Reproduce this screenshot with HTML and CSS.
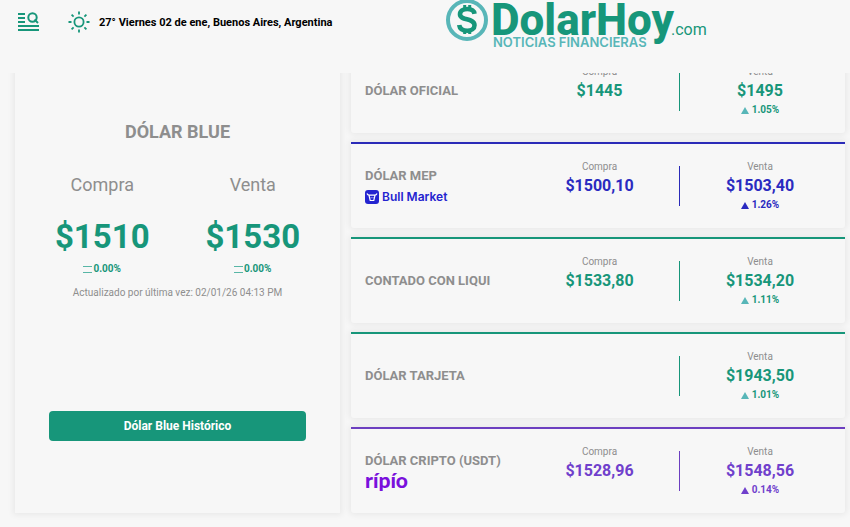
FILE: index.html
```
<!DOCTYPE html>
<html lang="es">
<head>
  <meta charset="UTF-8">
  <meta name="viewport" content="width=device-width, initial-scale=1.0">
  <title>DolarHoy.com</title>
  <link rel="stylesheet" href="styles.css">
</head>
<body>
  <header class="header">
    <div class="header-left">
      <button class="menu-button" type="button" aria-label="Menú">
        <svg width="22" height="20" viewBox="0 0 22 20" fill="none" stroke="#17967a" stroke-width="2">
          <path d="M0 2h7M0 6h7M0 10h7M0 14h21M0 18h21" />
          <circle cx="14.500" cy="5.500" r="4.200" />
          <path d="M16.500 7.500l3.500 3.500" />
        </svg>
      </button>
      <svg class="sun" width="22" height="22" viewBox="0 0 22 22" fill="none" stroke="#17967a" stroke-width="1.8">
        <circle cx="11" cy="11" r="4.600" />
        <path d="M11 .5v3M11 18.500v3M.5 11h3M18.500 11h3M3.600 3.600l2 2M16.400 16.400l2 2M3.600 18.400l2-2M16.400 5.600l2-2" />
      </svg>
      <span class="weather">27° Viernes 02 de ene, Buenos Aires, Argentina</span>
    </div>
    <a class="logo" href="#" aria-label="DolarHoy.com">
      <svg width="264" height="52" viewBox="0 0 264 52">
        <circle cx="22" cy="20" r="19" fill="none" stroke="#58b6b8" stroke-width="4" />
        <path d="M29.500 13.800C29 10.500 26 9 22.300 9C18 9 15 11 15 14.200C15 21 29.500 17.500 29.500 25.200C29.500 28.500 26.500 30.700 22.300 30.700C18 30.700 14.700 28.800 14.200 25" fill="none" stroke="#17967a" stroke-width="4.600" />
        <path d="M19.700 5v4M24.700 5v4M19.700 30v4M24.700 30v4" fill="none" stroke="#17967a" stroke-width="3" />
        <text class="logo-name" x="46" y="35">DolarHoy</text>
        <text class="logo-com" x="226" y="35">.com</text>
        <text class="logo-tag" x="48" y="47">NOTICIAS FINANCIERAS</text>
      </svg>
    </a>
  </header>

  <main class="main">
    <section class="blue">
      <h1 class="blue-title">DÓLAR BLUE</h1>
      <div class="blue-values">
        <div>
          <div class="blue-label">Compra</div>
          <div class="blue-price">$1510</div>
          <div class="var"><i class="equal"></i>0.00%</div>
        </div>
        <div>
          <div class="blue-label">Venta</div>
          <div class="blue-price">$1530</div>
          <div class="var"><i class="equal"></i>0.00%</div>
        </div>
      </div>
      <p class="updated">Actualizado por última vez: 02/01/26 04:13 PM</p>
      <a class="history" href="#">Dólar Blue Histórico</a>
    </section>

    <section class="rates">
      <article class="card">
        <h2 class="name">DÓLAR OFICIAL</h2>
        <div class="value compra">
          <div class="label">Compra</div>
          <div class="price">$1445</div>
        </div>
        <div class="value venta">
          <div class="label">Venta</div>
          <div class="price">$1495</div>
          <div class="var"><i class="up"></i>1.05%</div>
        </div>
      </article>

      <article class="card mep">
        <div>
          <h2 class="name">DÓLAR MEP</h2>
          <a class="sponsor bull" href="#">
            <svg width="14" height="14" viewBox="0 0 14 14">
              <rect width="14" height="14" rx="3" fill="#2424d0" />
              <path d="M2 3.500c.5 1.500 1.500 1.600 2.500 1.600h5c1 0 2-.1 2.500-1.600M4 5.300l1.200 5.200h3.600L10 5.300M5.800 7.600h.6M7.700 7.600h.6" fill="none" stroke="#fff" stroke-width="1.200" />
            </svg>
            Bull Market
          </a>
        </div>
        <div class="value compra">
          <div class="label">Compra</div>
          <div class="price">$1500,10</div>
        </div>
        <div class="value venta">
          <div class="label">Venta</div>
          <div class="price">$1503,40</div>
          <div class="var"><i class="up"></i>1.26%</div>
        </div>
      </article>

      <article class="card">
        <h2 class="name">CONTADO CON LIQUI</h2>
        <div class="value compra">
          <div class="label">Compra</div>
          <div class="price">$1533,80</div>
        </div>
        <div class="value venta">
          <div class="label">Venta</div>
          <div class="price">$1534,20</div>
          <div class="var"><i class="up"></i>1.11%</div>
        </div>
      </article>

      <article class="card">
        <h2 class="name">DÓLAR TARJETA</h2>
        <div class="value compra"></div>
        <div class="value venta">
          <div class="label">Venta</div>
          <div class="price">$1943,50</div>
          <div class="var"><i class="up"></i>1.01%</div>
        </div>
      </article>

      <article class="card cripto">
        <div>
          <h2 class="name">DÓLAR CRIPTO (USDT)</h2>
          <a class="sponsor ripio" href="#">rípío</a>
        </div>
        <div class="value compra">
          <div class="label">Compra</div>
          <div class="price">$1528,96</div>
        </div>
        <div class="value venta">
          <div class="label">Venta</div>
          <div class="price">$1548,56</div>
          <div class="var"><i class="up"></i>0.14%</div>
        </div>
      </article>
    </section>
  </main>
</body>
</html>
```
FILE: styles.css
```
* {
  box-sizing: border-box;
}

body {
  margin: 0;
  background-color: #f7f7f7;
  font-family: Roboto, Arial, sans-serif;
  color: #8e8e8e;
}

h1,
h2,
p {
  margin: 0;
}

a {
  text-decoration: none;
}

/* Header stays over the content when the page scrolls */
.header {
  position: fixed;
  top: 0;
  left: 0;
  right: 0;
  z-index: 1;
  height: 73px;
  padding-left: 18px;
  background-color: #f7f7f7;
  display: grid;
  grid-template-columns: 1fr 1fr;
  align-items: start;
}

.header-left {
  display: flex;
  align-items: center;
  padding-top: 11px;
}

.menu-button {
  display: flex;
  padding: 0;
  margin-right: 28px;
  border: none;
  background: none;
  cursor: pointer;
}

.sun {
  margin-right: 9px;
}

.weather {
  font-size: 11px;
  font-weight: bold;
  color: #000;
}

.logo {
  padding-left: 11px;
}

.logo svg {
  display: block;
}

.logo-name {
  font-size: 44px;
  font-weight: 800;
  fill: #17967a;
}

.logo-com {
  font-size: 16px;
  fill: #17967a;
}

.logo-tag {
  font-family: Inter, sans-serif;
  font-size: 13px;
  font-weight: 600;
  fill: #58b6b8;
}

.main {
  display: grid;
  grid-template-columns: 325fr 494fr;
  gap: 11px;
  padding: 47px 5px 15px 15px;
}

.blue {
  padding: 74px 12px 0;
  background-color: #f7f7f7;
  box-shadow: 0 0 6px 2px rgba(0, 0, 0, 0.06);
  text-align: center;
}

.blue-title {
  font-size: 18px;
  line-height: 22px;
  font-weight: bold;
}

.blue-values {
  display: grid;
  grid-template-columns: 1fr 1fr;
  margin-top: 30px;
}

.blue-label {
  font-size: 18px;
  line-height: 24px;
}

.blue-price {
  margin: 20px 0 5px;
  font-size: 33px;
  line-height: 40px;
  font-weight: bold;
  color: #17967a;
}

.var {
  display: flex;
  align-items: center;
  justify-content: center;
  font-size: 10px;
  line-height: 14px;
  font-weight: bold;
  color: #17967a;
}

.equal {
  width: 9px;
  height: 7px;
  margin-right: 1px;
  border-top: 1px solid #58b6a6;
  border-bottom: 1px solid #58b6a6;
}

.updated {
  margin-top: 10px;
  font-size: 10px;
  line-height: 14px;
}

.history {
  display: block;
  margin: 111px 22px 0;
  border-radius: 4px;
  background-color: #17967a;
  color: #fff;
  font-size: 12px;
  line-height: 30px;
  font-weight: bold;
}

.rates {
  display: grid;
  gap: 9px;
}

.card {
  display: grid;
  grid-template-columns: 31fr 32fr 32fr;
  align-items: center;
  height: 86px;
  padding: 0 5px 0 14px;
  border-top: 2px solid #17967a;
  border-radius: 0 0 3px 3px;
  background-color: #f7f7f7;
  box-shadow: 0 0 6px 2px rgba(0, 0, 0, 0.06);
}

.name {
  font-size: 13px;
  line-height: 18px;
  font-weight: bold;
  white-space: nowrap;
}

.value {
  height: 40px;
  text-align: center;
}

.compra {
  border-right: 1px solid #17967a;
}

/* The label is centered on the top end of the divider */
.label {
  margin-top: -3px;
  font-size: 10px;
  line-height: 8px;
}

.price {
  margin: 5px 0;
  font-size: 16px;
  line-height: 20px;
  font-weight: bold;
  color: #17967a;
}

.value .var {
  line-height: 8px;
}

.up {
  margin-right: 3px;
  border: 4px solid transparent;
  border-top: none;
  border-bottom: 7px solid #58b6b8;
}

.sponsor {
  display: flex;
  align-items: center;
}

.bull {
  gap: 3px;
  margin-top: 4px;
  font-family: Inter, sans-serif;
  font-size: 12px;
  line-height: 16px;
  font-weight: 600;
  color: #2424d0;
}

.ripio {
  font-family: Lato, sans-serif;
  font-size: 21px;
  line-height: 20px;
  font-weight: 900;
  color: #7a10dc;
}

.mep,
.mep .compra {
  border-color: #2b2bb8;
}

.mep .price,
.mep .var {
  color: #2a2ac0;
}

.mep .up {
  border-bottom-color: #2a2ac0;
}

.cripto,
.cripto .compra {
  border-color: #6c3fc0;
}

.cripto .price,
.cripto .var {
  color: #7040cc;
}

.cripto .up {
  border-bottom-color: #7040cc;
}
```
